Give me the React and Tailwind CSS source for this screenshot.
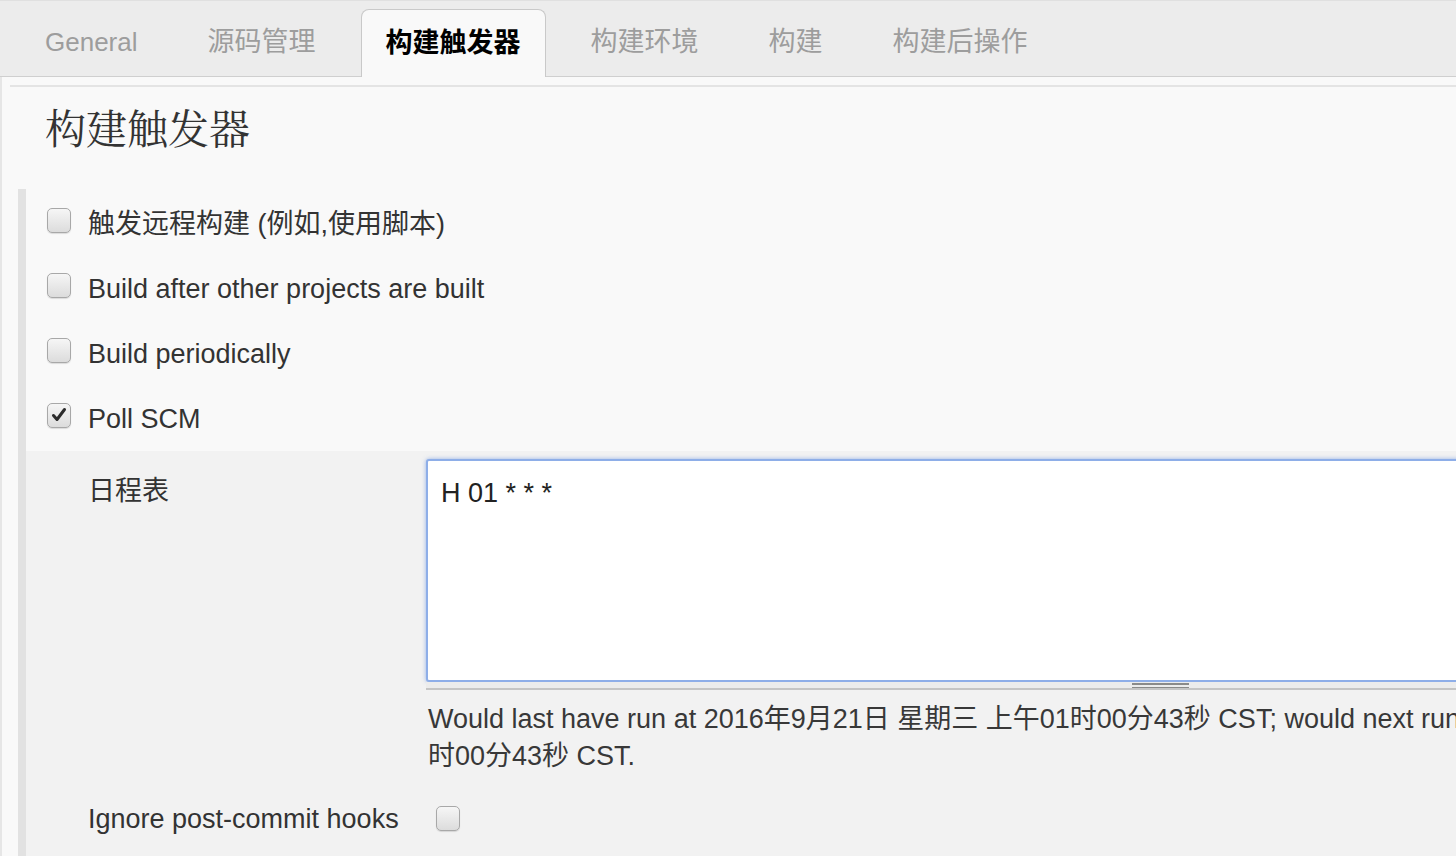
import React from "react";

function Checkbox({ checked = false, className = "" }) {
  return (
    <div
      className={
        "w-[24px] h-[25px] shrink-0 rounded-[5px] border border-[#a8a8a8] bg-gradient-to-b from-[#f6f6f6] to-[#dcdcdc] shadow-[0_1px_1px_rgba(0,0,0,0.12)] flex items-center justify-center " +
        className
      }
    >
      {checked && (
        <svg width="18" height="18" viewBox="0 0 18 18">
          <path
            d="M3.5 9.5 L7 13.5 L14.5 3.5"
            fill="none"
            stroke="#2b2b2b"
            strokeWidth="3"
            strokeLinecap="round"
            strokeLinejoin="round"
          />
        </svg>
      )}
    </div>
  );
}

function Tab({ label, active = false, className = "" }) {
  if (active) {
    return (
      <div className={"relative top-px h-[68px] px-[24px] flex items-center bg-[#f9f9f9] border border-b-0 border-[#c9c9c9] rounded-t-[8px] text-black font-bold " + className}>
        {label}
      </div>
    );
  }
  return (
    <div className={"h-[68px] px-[24px] flex items-center border border-transparent text-[#9d9d9d] " + className}>
      {label}
    </div>
  );
}

function Row({ label, checked }) {
  return (
    <div className="h-[65px] flex items-center pl-[21px]">
      <Checkbox checked={checked} className="mb-[7px]" />
      <span className="ml-[17px] text-[27px] leading-[36px] text-[#333]">{label}</span>
    </div>
  );
}

export default function App() {
  return (
    <div className="w-[1456px] h-[856px] overflow-hidden bg-[#f9f9f9] flex flex-col font-['Liberation_Sans','Noto_Sans_CJK_SC',sans-serif]">
      {/* Tab bar */}
      <div className="h-[77px] shrink-0 bg-[#ececec] border-t border-[#e0e0e0] border-b border-b-[#cfcfcf] flex items-end pl-[20px] gap-[20px] text-[27px]">
        <Tab label="General" className="text-[26px]" />
        <Tab label="源码管理" />
        <Tab label="构建触发器" active />
        <Tab label="构建环境" />
        <Tab label="构建" />
        <Tab label="构建后操作" />
      </div>

      {/* Content */}
      <div className="flex-1 flex flex-col border-l-2 border-[#e6e6e6]">
        <div className="mt-[8px] ml-[8px] border-t-2 border-[#e4e4e4]"></div>
        <h1 className="mt-[16px] pl-[43px] text-[41px] leading-[48px] text-[#333] font-normal font-['Noto_Serif_CJK_SC','Noto_Sans_CJK_SC',serif]">
          构建触发器
        </h1>

        <div className="mt-[38px] ml-[16px] flex-1 border-l-[8px] border-[#e2e2e2] flex flex-col">
          <div className="pt-[2px]">
            <Row label="触发远程构建 (例如,使用脚本)" />
            <Row label="Build after other projects are built" />
            <Row label="Build periodically" />
            <Row label="Poll SCM" checked />
          </div>

          <div className="flex-1 bg-[#f2f2f2] pt-[8px] pl-[62px] text-[#333]">
            <div className="flex">
              <div className="w-[338px] shrink-0 mt-[14px] text-[27px] leading-[36px]">日程表</div>
              <div className="w-[1100px] shrink-0 flex flex-col">
                <textarea
                  readOnly
                  defaultValue="H 01 * * *"
                  className="w-full h-[223px] resize-none outline-none bg-white border-2 border-[#8eaee8] rounded-[3px] shadow-[0_0_4px_rgba(110,150,225,0.7)] px-[13px] pt-[15px] text-[27px] leading-[34px] text-[#222] font-['Liberation_Sans',sans-serif]"
                />
                <div className="h-[8px] bg-[#ececec] border-b-2 border-[#c5c5c5] flex">
                  <div className="ml-[706px] w-[57px] flex flex-col gap-[2px] pt-[1px]">
                    <div className="h-[2px] bg-[#8a8a8a]"></div>
                    <div className="h-[2px] bg-[#8a8a8a]"></div>
                  </div>
                </div>
                <div className="mt-[11px] ml-[2px] text-[27px] leading-[37px] text-[#383838] whitespace-nowrap">
                  <div>Would last have run at 2016年9月21日 星期三 上午01时00分43秒 CST; would next run at 2016年9月22日 星期四 上午01</div>
                  <div>时00分43秒 CST.</div>
                </div>
              </div>
            </div>

            <div className="mt-[26px] flex items-center">
              <span className="w-[338px] shrink-0 text-[27px] leading-[36px]">Ignore post-commit hooks</span>
              <Checkbox className="ml-[10px] mb-[2px]" />
            </div>
          </div>
        </div>
      </div>
    </div>
  );
}
